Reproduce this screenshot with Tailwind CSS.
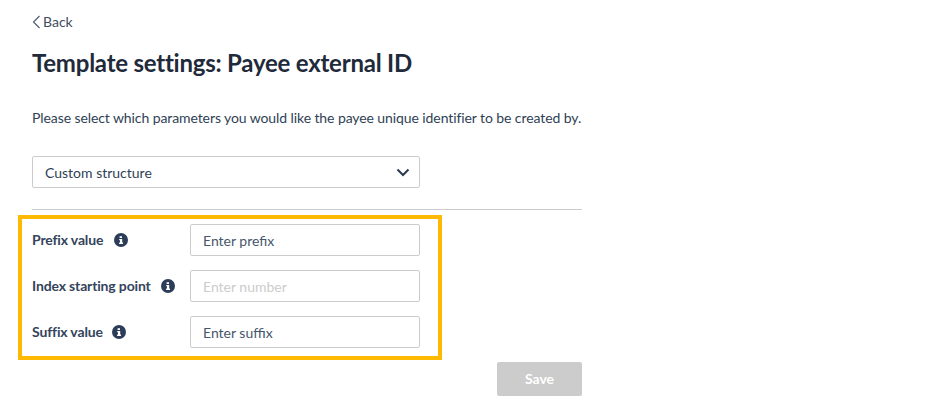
<!DOCTYPE html>
<html lang="en">
  <head>
    <meta charset="UTF-8" />
    <title>Template settings</title>
    <script src="https://cdn.jsdelivr.net/npm/@tailwindcss/browser@4"></script>
  </head>
  <body class="bg-white font-['Lato',sans-serif] text-[#2b3a4f]">
    <div class="relative w-[940px] h-[410px] overflow-hidden">
      <div class="w-[550px] ml-[32px] pt-[13px]">
        <!-- Back link -->
        <a class="flex items-center gap-[2px] h-[18px] text-sm text-[#3f4d60]">
          <svg class="w-[9px] h-[14px]" viewBox="0 0 9 14" fill="none" stroke="#4b5869" stroke-width="1.1">
            <path d="M7.5 1 L1.5 7 L7.5 13" />
          </svg>
          Back
        </a>

        <h1 class="mt-[10px] h-[44px] leading-[44px] text-2xl font-bold tracking-[-0.23px] text-[#1f2a3a]">
          Template settings: Payee external ID
        </h1>

        <p class="mt-[23px] h-[20px] leading-[20px] text-sm tracking-[-0.09px] whitespace-nowrap text-[#2f3f55]">
          Please select which parameters you would like the payee unique identifier to be created by.
        </p>

        <!-- Structure dropdown -->
        <div class="mt-[28px] w-[388px] h-[32px] flex items-center justify-between pl-[12px] pr-[9px] border border-[#cccccc] rounded-[2px] text-sm text-[#2f3f55]">
          <span class="pt-[2px]">Custom structure</span>
          <svg class="w-[14px] h-[9px]" viewBox="0 0 14 9" fill="none" stroke="#2b3a4f" stroke-width="2">
            <path d="M1.5 1.5 L7 7 L12.5 1.5" />
          </svg>
        </div>

        <div class="mt-[21px] h-px bg-[#cccccc]"></div>

        <!-- Template parameters -->
        <div class="mt-[14px] flex flex-col gap-[14px]">
          <div class="flex items-center h-[32px]">
            <div class="w-[158px] flex items-center gap-[11px] text-sm font-bold tracking-[-0.15px] text-[#34445c]">
              <span>Prefix value</span>
              <svg class="w-[14px] h-[14px]" viewBox="0 0 14 14">
                <circle cx="7" cy="7" r="7" fill="#2b3d59" />
                <path d="M5.6 3.2h2.4v1.9H5.6z M5.2 6h3v3.6h.8v1.3H5.1V9.6h.9V7.3h-.8z" fill="#fff" />
              </svg>
            </div>
            <input type="text" placeholder="Enter prefix" class="w-[230px] h-[32px] px-[12px] border border-[#cccccc] rounded-[2px] text-sm placeholder:text-[#47566b] outline-none" />
          </div>
          <div class="flex items-center h-[32px]">
            <div class="w-[158px] flex items-center gap-[10px] text-sm font-bold tracking-[-0.15px] text-[#34445c]">
              <span>Index starting point</span>
              <svg class="w-[14px] h-[14px]" viewBox="0 0 14 14">
                <circle cx="7" cy="7" r="7" fill="#2b3d59" />
                <path d="M5.6 3.2h2.4v1.9H5.6z M5.2 6h3v3.6h.8v1.3H5.1V9.6h.9V7.3h-.8z" fill="#fff" />
              </svg>
            </div>
            <input type="text" placeholder="Enter number" class="w-[230px] h-[32px] px-[12px] border border-[#cccccc] rounded-[2px] text-sm placeholder:text-[#cccccc] outline-none" />
          </div>
          <div class="flex items-center h-[32px]">
            <div class="w-[158px] flex items-center gap-[9px] text-sm font-bold tracking-[-0.15px] text-[#34445c]">
              <span>Suffix value</span>
              <svg class="w-[14px] h-[14px]" viewBox="0 0 14 14">
                <circle cx="7" cy="7" r="7" fill="#2b3d59" />
                <path d="M5.6 3.2h2.4v1.9H5.6z M5.2 6h3v3.6h.8v1.3H5.1V9.6h.9V7.3h-.8z" fill="#fff" />
              </svg>
            </div>
            <input type="text" placeholder="Enter suffix" class="w-[230px] h-[32px] px-[12px] border border-[#cccccc] rounded-[2px] text-sm placeholder:text-[#47566b] outline-none" />
          </div>
        </div>

        <div class="mt-[14px] flex justify-end">
          <button class="w-[85px] h-[34px] bg-[#cccccc] rounded-[2px] text-sm font-bold text-white">Save</button>
        </div>
      </div>

      <!-- Highlight box over the fields -->
      <div class="absolute left-[18px] top-[215px] w-[424px] h-[145px] border-[4px] border-[#ffb900]"></div>
    </div>
  </body>
</html>
